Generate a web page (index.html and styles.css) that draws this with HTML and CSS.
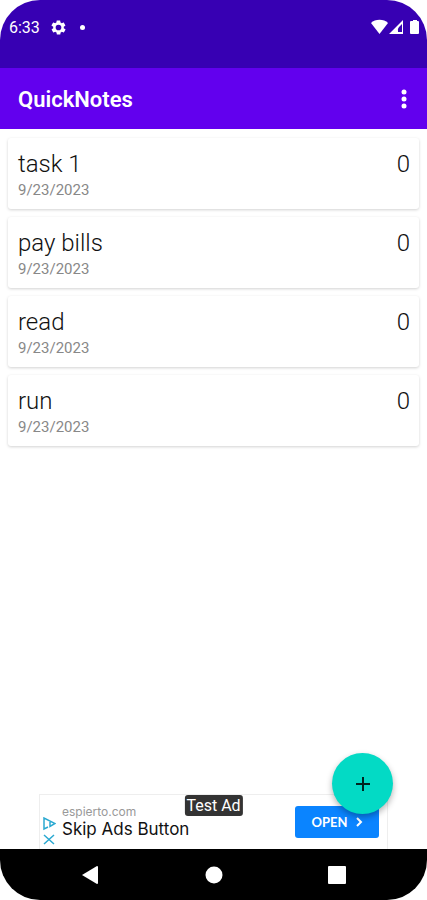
FILE: index.html
```
<!DOCTYPE html>
<html lang="en">
<head>
    <meta charset="UTF-8">
    <meta name="viewport" content="width=device-width, initial-scale=1.0">
    <title>QuickNotes</title>
    <link rel="stylesheet" href="styles.css">
</head>
<body>
    <div class="phone">
        <div class="status-bar">
            <span class="clock">6:33</span>
            <svg class="gear" viewBox="0 0 24 24" width="17" height="17"><path fill="#fff" fill-rule="evenodd" d="M19.4 13c.1-.3.1-.6.1-1s0-.7-.1-1l2.1-1.6c.2-.2.3-.5.1-.7l-2-3.4c-.1-.2-.4-.3-.6-.2l-2.5 1c-.5-.4-1.1-.7-1.7-1l-.4-2.6c0-.3-.2-.5-.5-.5h-4c-.2 0-.4.2-.5.5l-.4 2.6c-.6.3-1.1.6-1.7 1l-2.5-1c-.2-.1-.5 0-.6.2l-2 3.4c-.1.2-.1.5.1.7L4.6 11c-.1.3-.1.7-.1 1s0 .7.1 1l-2.1 1.6c-.2.2-.2.5-.1.7l2 3.4c.1.2.4.3.6.2l2.5-1c.5.4 1.1.7 1.7 1l.4 2.6c0 .3.2.5.5.5h4c.2 0 .5-.2.5-.5l.4-2.6c.6-.3 1.2-.6 1.7-1l2.5 1c.2.1.5 0 .6-.2l2-3.4c.1-.2.1-.5-.1-.7zM12 16a4 4 0 1 1 0-8 4 4 0 0 1 0 8z"/></svg>
            <span class="dot"></span>
            <svg class="signals" viewBox="0 0 50 16" width="50" height="16">
                <path fill="#fff" d="M0 4C4-.3 13-.3 17 4L8.500 15z"/>
                <path fill="#fff" fill-rule="evenodd" d="M18 15 32 1v14zM27 13h4V5l-3 3q-2 2-1 5z"/>
                <path fill="#fff" d="M42 1h4v1h1q1 0 1 1v11q0 1-1 1h-7q-1 0-1-1V3q0-1 1-1h2z"/>
            </svg>
        </div>
        <header class="app-bar">
            <h1>QuickNotes</h1>
            <button class="menu" aria-label="More options">
                <svg viewBox="0 0 6 20" width="6" height="20" fill="#fff"><circle cx="3" cy="3" r="2.500"/><circle cx="3" cy="10" r="2.500"/><circle cx="3" cy="17" r="2.500"/></svg>
            </button>
        </header>
        <main class="notes">
            <article class="note">
                <div>
                    <h2>task 1</h2>
                    <p>9/23/2023</p>
                </div>
                <span class="count">0</span>
            </article>
            <article class="note">
                <div>
                    <h2>pay bills</h2>
                    <p>9/23/2023</p>
                </div>
                <span class="count">0</span>
            </article>
            <article class="note">
                <div>
                    <h2>read</h2>
                    <p>9/23/2023</p>
                </div>
                <span class="count">0</span>
            </article>
            <article class="note">
                <div>
                    <h2>run</h2>
                    <p>9/23/2023</p>
                </div>
                <span class="count">0</span>
            </article>
        </main>
        <div class="bottom">
            <button class="fab" aria-label="Add note">
                <svg viewBox="0 0 16 16" width="16" height="16"><path d="M8 1v14M1 8h14" stroke="#00251f" stroke-width="2"/></svg>
            </button>
            <section class="ad">
                <svg class="ad-icons" viewBox="0 0 14 30" width="14" height="30" fill="none" stroke="#2ba9d1" stroke-width="1.500">
                    <path d="M6 10 2 12V1l11 5.500-5 3V5"/>
                    <path d="m2 18 10 9M12 18 2 27"/>
                </svg>
                <div class="ad-text">
                    <span class="ad-site">espierto.com</span>
                    <span class="ad-title">Skip Ads Button</span>
                </div>
                <button class="open">OPEN
                    <svg viewBox="0 0 8 10" width="8" height="10"><path d="m2 1 4 4-4 4" fill="none" stroke="#fff" stroke-width="2"/></svg>
                </button>
                <span class="ad-tag">Test Ad</span>
            </section>
        </div>
        <nav class="nav-bar">
            <button aria-label="Back"><svg viewBox="0 0 18 20" width="18" height="20"><path fill="#fff" d="M16 1q1 0 1 1v16q0 1-1 1L1 10z"/></svg></button>
            <button aria-label="Home"><svg viewBox="0 0 18 18" width="18" height="18"><circle cx="9" cy="9" r="8.500" fill="#fff"/></svg></button>
            <button aria-label="Recent apps"><svg viewBox="0 0 18 18" width="18" height="18"><rect width="18" height="18" rx="1" fill="#fff"/></svg></button>
        </nav>
    </div>
</body>
</html>
```
FILE: styles.css
```
* {
    box-sizing: border-box;
}
body {
    margin: 0;
    background: #fff;
    font-family: Roboto, sans-serif;
}
h1, h2, p {
    margin: 0;
    font-weight: 400;
}
button {
    display: flex;
    align-items: center;
    justify-content: center;
    padding: 0;
    border: none;
    background: none;
    cursor: pointer;
}
.phone {
    display: flex;
    flex-direction: column;
    min-height: 100vh;
    overflow: hidden;
    border-radius: 40px;
    background: #fff;
}
.status-bar {
    display: flex;
    align-items: center;
    height: 68px;
    padding: 0 6px 14px 9px;
    background: #3700b3;
    color: #fff;
}
.clock {
    font-size: 16px;
}
.gear {
    margin-left: 10px;
}
.dot {
    width: 5px;
    height: 5px;
    margin-left: 13px;
    border-radius: 50%;
    background: #fff;
}
.signals {
    margin-left: auto;
}
.app-bar {
    display: flex;
    align-items: center;
    justify-content: space-between;
    height: 61px;
    padding: 0 13px 0 18px;
    background: #6200ee;
    color: #fff;
}
.app-bar h1 {
    padding-top: 2px;
    font-size: 22px;
    font-weight: 600;
}
.menu {
    width: 20px;
    height: 40px;
}
.notes {
    display: flex;
    flex-direction: column;
    gap: 8px;
    padding: 9px 8px;
}
.note {
    display: flex;
    justify-content: space-between;
    padding: 11px 9px 7px 10px;
    border-radius: 3px;
    background: #fff;
    box-shadow: 0 1px 3px rgba(0, 0, 0, 0.18);
}
.note h2, .count {
    color: #111;
    font-size: 24px;
    font-weight: 350;
    line-height: 30px;
}
.note p {
    color: #888;
    font-size: 15px;
    line-height: 23px;
}
.bottom {
    position: relative;
    margin-top: auto;
    padding: 0 39px;
}
.fab {
    position: absolute;
    right: 34px;
    bottom: 35px;
    z-index: 1;
    width: 61px;
    height: 61px;
    border-radius: 50%;
    background: #03dac5;
    box-shadow: 0 3px 6px rgba(0, 0, 0, 0.3);
}
.ad {
    position: relative;
    display: flex;
    align-items: center;
    height: 55px;
    padding: 0 8px 0 2px;
    border: 1px solid #eee;
    border-bottom: none;
    font-family: Inter, sans-serif;
}
.ad-icons {
    align-self: flex-end;
    margin-bottom: 2px;
}
.ad-text {
    display: flex;
    flex-direction: column;
    margin-left: 6px;
}
.ad-site {
    color: #999;
    font-size: 12px;
    line-height: 14px;
}
.ad-title {
    color: #111;
    font-size: 17px;
    line-height: 20px;
}
.ad-tag {
    position: absolute;
    top: 0;
    left: 50%;
    padding: 0 2px;
    border-radius: 3px;
    background: #333;
    color: #fff;
    font-family: Roboto, sans-serif;
    font-size: 16px;
    line-height: 21px;
    transform: translateX(-50%);
}
.open {
    gap: 7px;
    width: 84px;
    height: 32px;
    margin-left: auto;
    border-radius: 3px;
    background: #0a84ff;
    color: #fff;
    font-family: Lato, sans-serif;
    font-size: 13px;
    font-weight: 700;
}
.nav-bar {
    display: flex;
    align-items: center;
    justify-content: space-between;
    height: 51px;
    padding: 0 81px;
    background: #000;
}
```
